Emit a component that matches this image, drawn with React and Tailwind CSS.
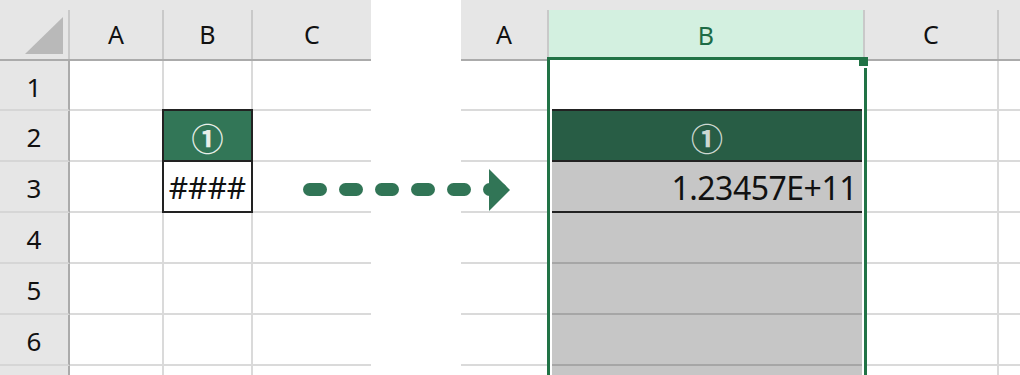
import React from 'react';

// body rows under the header; row 7 runs off the bottom edge
const ROWS = [
  { n: 1, h: 'h-[50px]' },
  { n: 2, h: 'h-[51px]' },
  { n: 3, h: 'h-[51px]' },
  { n: 4, h: 'h-[51px]' },
  { n: 5, h: 'h-[51px]' },
  { n: 6, h: 'h-[51px]' },
  { n: 7, h: 'h-[51px]' },
];

const HeaderCell = ({ width, children, sep = true }) => (
  <div className={`flex shrink-0 ${width}`}>
    <div className="flex-1 flex items-center justify-center text-[25px] text-[#111]">{children}</div>
    {sep && <div className="w-[2px] bg-[#c9c9c9]" />}
  </div>
);

const SelectAllCorner = () => (
  <div className="flex shrink-0 w-[70px]">
    <div className="flex-1 flex items-end justify-end pr-[5px] pb-[5px]">
      <svg width="38" height="37" viewBox="0 0 38 37">
        <polygon points="38,0 38,37 0,37" fill="#b9b9b9" />
      </svg>
    </div>
    <div className="w-[2px] bg-[#c9c9c9]" />
  </div>
);

const LeftSheet = () => (
  <div className="w-[371px] shrink-0 flex flex-col">
    <div className="h-[10px] shrink-0 bg-[#e6e6e6]" />
    <div className="flex h-[51px] shrink-0 bg-[#e6e6e6] border-b-2 border-[#ababab]">
      <SelectAllCorner />
      <HeaderCell width="w-[94px]">A</HeaderCell>
      <HeaderCell width="w-[89px]">B</HeaderCell>
      <HeaderCell width="w-[118px]" sep={false}>C</HeaderCell>
    </div>
    {ROWS.map(({ n, h }) => (
      <div key={n} className={`flex shrink-0 ${h}`}>
        <div className="w-[70px] shrink-0 flex items-center justify-center pt-[4px] bg-[#e6e6e6] border-r-2 border-r-[#ababab] border-b-2 border-b-[#d6d6d6] text-[26px] text-[#111]">
          {n < 7 ? n : null}
        </div>
        <div className="w-[94px] shrink-0 border-r-2 border-b-2 border-[#dadada]" />
        {n === 2 ? (
          <div className="-ml-[2px] -mt-[2px] w-[91px] h-[53px] shrink-0 border-2 border-[#222] bg-[#327657] flex items-center justify-center pt-[6px] text-[32px] font-bold text-[#e8efe9]">
            ①
          </div>
        ) : n === 3 ? (
          <div className="-ml-[2px] -mt-[2px] w-[91px] h-[53px] shrink-0 border-2 border-[#222] bg-white flex items-center justify-center pt-[2px] text-[30px] text-[#111]">
            ####
          </div>
        ) : (
          <div className="w-[89px] shrink-0 border-r-2 border-b-2 border-[#dadada]" />
        )}
        <div className="flex-1 border-b-2 border-[#dadada]" />
      </div>
    ))}
  </div>
);

const PlainColumn = ({ width, label, sep = true, grid = 'border-b-2 border-[#dadada]' }) => (
  <div className={`flex flex-col shrink-0 ${width}`}>
    <div className="h-[10px] shrink-0 bg-[#e6e6e6]" />
    <div className="flex h-[51px] shrink-0 bg-[#e6e6e6] border-b-2 border-[#ababab]">
      <HeaderCell width="w-full" sep={sep}>{label}</HeaderCell>
    </div>
    {ROWS.map(({ n, h }) => (
      <div key={n} className={`shrink-0 ${h} ${grid}`} />
    ))}
  </div>
);

// column B with the whole column selected
const SelectedColumn = () => (
  <div className="relative w-[316px] shrink-0 flex flex-col">
    <div className="h-[10px] shrink-0 bg-[#e6e6e6]" />
    <div className="flex h-[47px] shrink-0 bg-[#d3f0e0]">
      <div className="flex-1 flex items-center justify-center pt-[4px] text-[25px] text-[#1d6b45]">B</div>
      <div className="w-[2px] bg-[#c9c9c9]" />
    </div>
    <div className="relative z-10 -mx-[2px] h-[340px] shrink-0 border-[3px] border-[#217346] px-[2px] bg-white flex flex-col">
      <div className="h-[49px] shrink-0" />
      <div className="h-[53px] shrink-0 border-y-2 border-[#222] bg-[#285d45] flex items-center justify-center pt-[6px] text-[32px] font-bold text-[#cdd8d1]">
        ①
      </div>
      <div className="h-[51px] shrink-0 border-b-2 border-[#222] bg-[#c6c6c6] flex items-center justify-end pr-[5px] pt-[3px] text-[32px] text-[#111] tracking-[-0.5px]">
        1.23457E+11
      </div>
      <div className="h-[51px] shrink-0 border-b-2 border-[#a6a6a6] bg-[#c6c6c6]" />
      <div className="h-[51px] shrink-0 border-b-2 border-[#a6a6a6] bg-[#c6c6c6]" />
      <div className="h-[51px] shrink-0 border-b-2 border-[#a6a6a6] bg-[#c6c6c6]" />
      <div className="flex-1 bg-[#c6c6c6]" />
    </div>
    {/* fill handle */}
    <div className="absolute z-20 left-[310px] top-[57px] w-[9px] h-[11px] bg-[#217346] border-b-2 border-white" />
  </div>
);

const DashedArrow = () => (
  <svg className="absolute left-[303px] top-[169px]" width="207" height="42" viewBox="0 0 207 42">
    {[0, 36, 72, 108, 144, 180].map((x) => (
      <rect key={x} x={x} y="14" width="24" height="13" rx="6.5" fill="#317556" />
    ))}
    <polygon points="186,0 207,21 186,42" fill="#317556" />
  </svg>
);

export default function App() {
  return (
    <div className="relative w-[1020px] h-[375px] overflow-hidden bg-white flex font-[family-name:Noto_Sans,Noto_Sans_CJK_KR,sans-serif] leading-normal">
      <LeftSheet />
      <div className="w-[90px] shrink-0" />
      <div className="flex-1 flex">
        <PlainColumn width="w-[88px]" label="A" />
        <SelectedColumn />
        <PlainColumn width="w-[134px]" label="C" grid="border-b-2 border-r-2 border-[#dadada]" />
        <PlainColumn width="w-[21px]" label="" sep={false} />
      </div>
      <DashedArrow />
    </div>
  );
}
